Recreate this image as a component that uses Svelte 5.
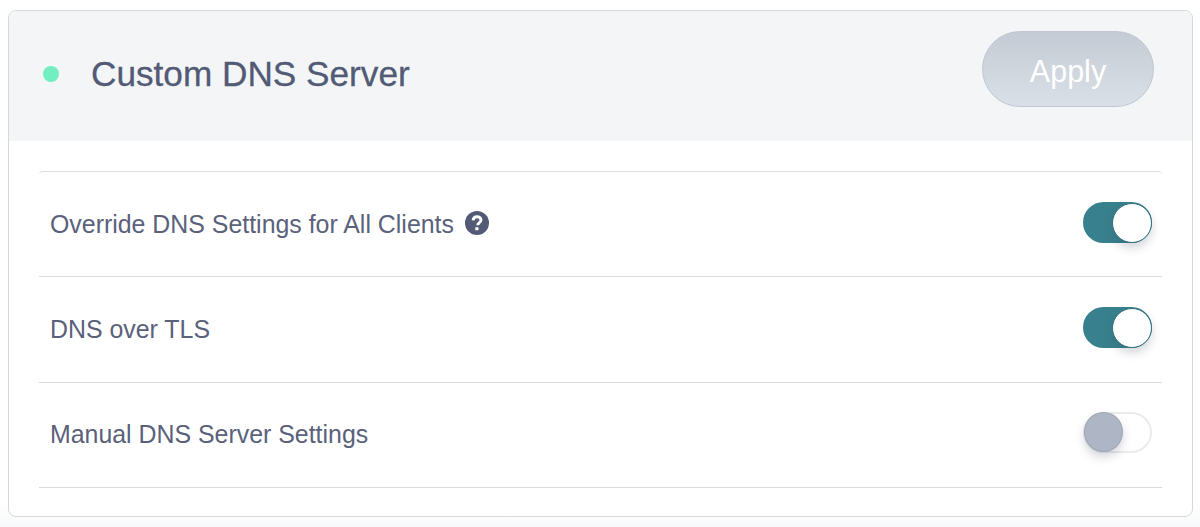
<script>
	const rows = [
		{ label: 'Override DNS Settings for All Clients', on: true, help: true },
		{ label: 'DNS over TLS', on: true, help: false },
		{ label: 'Manual DNS Server Settings', on: false, help: false }
	];
</script>

<div class="page">
	<section class="card">
		<header class="head">
			<span class="dot"></span>
			<h1 class="title">Custom DNS Server</h1>
			<button class="apply" type="button">Apply</button>
		</header>
		<div class="list">
			{#each rows as r}
				<div class="row">
					<span class="label">{r.label}</span>
					{#if r.help}
						<svg class="help" viewBox="0 0 24 24" width="24" height="24" aria-hidden="true">
							<circle cx="12" cy="12" r="12" fill="#525a75" />
							<path d="M8.1 9.4c.2-2.4 1.9-3.7 4-3.7 2.2 0 3.9 1.3 3.9 3.3 0 1.6-1 2.3-1.9 2.9-.8.5-1.3 1-1.3 2v.4" fill="none" stroke="#fff" stroke-width="2.9" />
							<rect x="10.3" y="16.2" width="3.2" height="3.1" rx=".5" fill="#fff" />
						</svg>
					{/if}
					<span class="toggle" class:on={r.on}><span class="knob"></span></span>
				</div>
			{/each}
		</div>
	</section>
</div>

<style>
	:global(body) { background: #fff; }
	.page { height: 527px; padding: 10px 7px 10px 8px; box-sizing: border-box; background: linear-gradient(#fff 500px, #f8f9fa); font-family: "Liberation Sans", Arial, sans-serif; }
	.card { height: 507px; box-sizing: border-box; border: 1.5px solid #d6d8da; border-radius: 8px; background: #fff; overflow: hidden; }
	.head { height: 130px; display: flex; align-items: center; padding: 0 38px 4px 34px; box-sizing: border-box; background: #f3f5f7; }
	.dot { width: 16px; height: 16px; border-radius: 50%; background: #72eec0; }
	.title { margin: 0 0 0 32px; flex: 1; font-size: 35.2px; font-weight: 400; color: #525a75; -webkit-text-stroke: 0.3px #525a75; }
	.apply { width: 172px; height: 76px; margin-top: -10px; padding: 4px 0 0; border: 1px solid #c0c7d1; border-radius: 38px; background: linear-gradient(#c5cbd4, #dae0e7); color: #fff; font: 400 30.5px "Liberation Sans", Arial, sans-serif; }
	.list { margin: 30px 30px 0 30px; border-top: 1.5px solid #dcdedf; border-top-left-radius: 4px; border-top-right-radius: 4px; }
	.row { height: 105.3px; display: flex; align-items: center; padding: 0 10px 0 11px; box-sizing: border-box; border-bottom: 1.5px solid #d9dbdd; }
	.label { font-size: 24.9px; color: #5a617b; }
	.help { margin-left: 11px; margin-top: -2px; }
	.toggle { position: relative; margin-left: auto; margin-top: -4px; width: 69px; height: 41px; box-sizing: border-box; border-radius: 21px; border: 2px solid #eaebed; background: #fff; }
	.toggle.on { background: #38808d; border-color: #38808d; }
	.knob { position: absolute; left: -1px; top: -2px; width: 37px; height: 38px; border-radius: 50%; background: #aeb6c5; border: 1px solid #9ea5b3; box-shadow: 0 5px 10px rgba(60, 70, 90, 0.22); }
	.on .knob { left: 27px; top: -1px; width: 38px; background: #fff; border-color: #2f6f7c; }
</style>
